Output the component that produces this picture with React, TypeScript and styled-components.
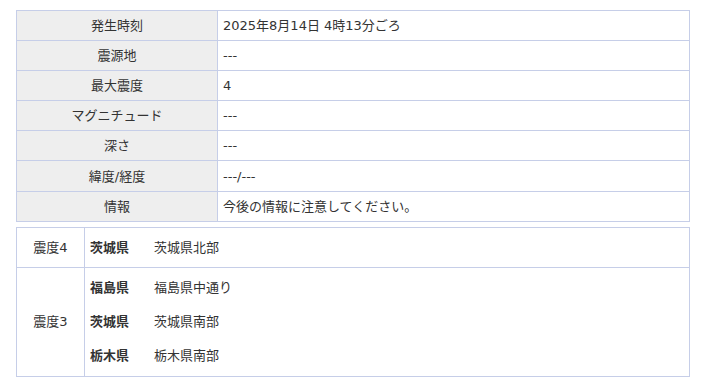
import React from 'react'
import styled, { createGlobalStyle } from 'styled-components'

const GlobalStyle = createGlobalStyle`
  body {
    margin: 0;
    background: #fff;
    color: #333;
    font-family: "DejaVu Sans", "Noto Sans CJK JP", sans-serif;
    font-size: 13px;
  }
`

const Page = styled.div`
  padding: 10px 12px 0 16px;
  display: flex;
  flex-direction: column;
  gap: 5px;
`

const InfoTable = styled.table`
  width: 674px;
  border-collapse: collapse;
  table-layout: fixed;
`

const Row = styled.tr<{ $h: number }>`
  height: ${(p) => p.$h}px;
`

const HeadCell = styled.th<{ $w?: number; $bg?: boolean }>`
  width: ${(p) => (p.$w ? `${p.$w}px` : 'auto')};
  border: 1px solid #c6cee8;
  background: ${(p) => (p.$bg ? '#eeeeee' : '#fff')};
  font-weight: normal;
  text-align: center;
  padding: 0;
  line-height: 1;
`

const Cell = styled.td`
  border: 1px solid #c6cee8;
  padding: 0 5px;
  line-height: 1;
`

const AreaList = styled.div`
  display: flex;
  flex-direction: column;
  padding: 3px 0;
`

const AreaRow = styled.div<{ $single?: boolean }>`
  display: grid;
  grid-template-columns: 64px 1fr;
  align-items: center;
  height: ${(p) => (p.$single ? 'auto' : '34px')};
`

const Pref = styled.span`
  font-weight: bold;
`

const overview: [string, string][] = [
  ['発生時刻', '2025年8月14日 4時13分ごろ'],
  ['震源地', '---'],
  ['最大震度', '4'],
  ['マグニチュード', '---'],
  ['深さ', '---'],
  ['緯度/経度', '---/---'],
  ['情報', '今後の情報に注意してください。'],
]

const intensities = [
  { scale: '震度4', h: 40, areas: [['茨城県', '茨城県北部']] },
  {
    scale: '震度3',
    h: 109,
    areas: [
      ['福島県', '福島県中通り'],
      ['茨城県', '茨城県南部'],
      ['栃木県', '栃木県南部'],
    ],
  },
]

const App = () => {
  return (
    <Page>
      <GlobalStyle />
      <InfoTable>
        <tbody>
          {overview.map(([k, v]) => (
            <Row $h={30.1} key={k}>
              <HeadCell $w={200} $bg>{k}</HeadCell>
              <Cell>{v}</Cell>
            </Row>
          ))}
        </tbody>
      </InfoTable>
      <InfoTable>
        <tbody>
          {intensities.map((s) => (
            <Row $h={s.h} key={s.scale}>
              <HeadCell $w={67}>{s.scale}</HeadCell>
              <Cell>
                {s.areas.length === 1 ? (
                  <AreaRow $single>
                    <Pref>{s.areas[0][0]}</Pref>
                    <span>{s.areas[0][1]}</span>
                  </AreaRow>
                ) : (
                  <AreaList>
                    {s.areas.map(([pref, area]) => (
                      <AreaRow key={area}>
                        <Pref>{pref}</Pref>
                        <span>{area}</span>
                      </AreaRow>
                    ))}
                  </AreaList>
                )}
              </Cell>
            </Row>
          ))}
        </tbody>
      </InfoTable>
    </Page>
  )
}

export default App
